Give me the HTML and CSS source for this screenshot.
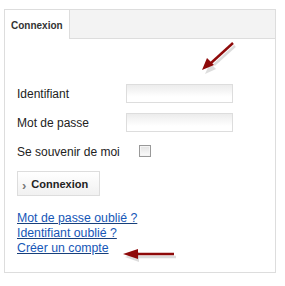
FILE: index.html
```html
<!DOCTYPE html>
<html lang="fr">
<head>
    <meta charset="UTF-8">
    <title>Connexion</title>
    <link rel="stylesheet" href="styles.css">
</head>
<body>

<div class="login-box">
    <div class="tabs">
        <div class="tab active">Connexion</div>
        <div class="tab-rest"></div>
    </div>

    <div class="panel">
        <form class="login-form">
            <div class="row">
                <label for="username">Identifiant</label>
                <input type="text" id="username" class="field">
            </div>
            <div class="row">
                <label for="password">Mot de passe</label>
                <input type="password" id="password" class="field">
            </div>
            <div class="row row-check">
                <label for="remember">Se souvenir de moi</label>
                <input type="checkbox" id="remember" class="check">
            </div>
            <button type="button" class="btn"><span class="chev">›</span>Connexion</button>
        </form>

        <ul class="links">
            <li><a href="#">Mot de passe oublié ?</a></li>
            <li><a href="#">Identifiant oublié ?</a></li>
            <li><a href="#">Créer un compte</a></li>
        </ul>

        <!-- annotation arrows -->
        <svg class="arrow arrow-top" width="40" height="36" viewBox="0 0 40 36">
            <line x1="33" y1="4" x2="12" y2="23" stroke="#bbb" stroke-width="2.4" opacity="0.5" transform="translate(2,3)"/>
            <polygon points="3,32 8,21 14,27" fill="#bbb" opacity="0.5" transform="translate(2,3)"/>
            <line x1="33" y1="4" x2="11" y2="24" stroke="#8e0a0a" stroke-width="2.4"/>
            <polygon points="2,31 7,19 14,26" fill="#8e0a0a"/>
        </svg>
        <svg class="arrow arrow-bottom" width="56" height="14" viewBox="0 0 56 14">
            <line x1="14" y1="5" x2="52" y2="5" stroke="#bbb" stroke-width="2.6" opacity="0.5" transform="translate(1,3)"/>
            <polygon points="1,5 15,0 15,10" fill="#bbb" opacity="0.5" transform="translate(1,3)"/>
            <line x1="13" y1="5" x2="51" y2="5" stroke="#8e0a0a" stroke-width="2.6"/>
            <polygon points="0,5 15,0 15,10" fill="#8e0a0a"/>
        </svg>
    </div>
</div>

</body>
</html>
```

FILE: styles.css
```css
body {
    margin: 0;
    padding: 9px 0 0 4px;
    font-family: "Liberation Sans", Arial, sans-serif;
    font-size: 12px;
    color: #222;
    background-color: white;
}

.login-box {
    width: 270px;
    height: 262px;
    border: 1px solid #ddd;
    background-color: white;
    display: flex;
    flex-direction: column;
}

.tabs {
    display: flex;
    height: 29px;
}

.tab {
    width: 65px;
    border-right: 1px solid #ddd;
    font-size: 10px;
    font-weight: bold;
    color: #333;
    padding: 10px 0 0 6px;
    box-sizing: border-box;
}

.tab-rest {
    flex: 1;
    background-color: #f3f3f3;
    border-bottom: 1px solid #ddd;
}

.panel {
    position: relative;
    flex: 1;
    padding: 45px 0 0 12px;
}

.login-form {
    margin: 0;
}

.row {
    display: flex;
    align-items: center;
    height: 19px;
    margin-bottom: 10px;
}

.row label {
    width: 109px;
}

.field {
    width: 107px;
    height: 19px;
    box-sizing: border-box;
    margin: 0;
    border: 1px solid #ddd;
    background: linear-gradient(#ececec, #fff 70%);
    outline: none;
}

.row-check {
    margin-top: 4px;
}

.row-check label {
    width: 122px;
}

.check {
    appearance: none;
    width: 12px;
    height: 12px;
    margin: -2px 0 0 0;
    border: 1px solid #999;
    box-sizing: border-box;
    background: linear-gradient(#e2e2e2, #fbfbfb);
    box-shadow: inset 0 0 0 1px #f4f4f4;
}

.btn {
    display: flex;
    align-items: center;
    margin-top: 1px;
    width: 83px;
    height: 25px;
    padding: 0 0 0 4px;
    border: 1px solid #ddd;
    background: linear-gradient(#fff, #f1f1f1);
    font-family: "Liberation Sans", Arial, sans-serif;
    font-size: 11px;
    font-weight: bold;
    color: #222;
    cursor: pointer;
}

.chev {
    color: #777;
    font-size: 13px;
    margin: 3px 5px 0 0;
}

.links {
    list-style: none;
    margin: 15px 0 0 0;
    padding: 0;
    line-height: 15px;
    font-size: 12.3px;
}

.links a {
    color: #1657b8;
    text-decoration: underline;
    text-decoration-color: #173f7a;
}

.arrow {
    position: absolute;
}

.arrow-top {
    left: 195px;
    top: 0;
}

.arrow-bottom {
    left: 118px;
    top: 210px;
}
```
